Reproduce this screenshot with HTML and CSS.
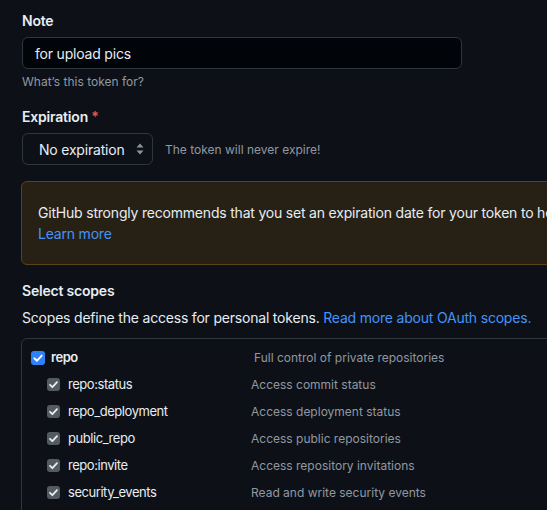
FILE: index.html
```html
<!DOCTYPE html>
<html lang="en">
<head>
<meta charset="utf-8">
<title>New personal access token</title>
<link rel="stylesheet" href="styles.css">
</head>
<body>
<div class="page">
  <label class="label">Note</label>
  <div class="input">for upload pics</div>
  <p class="hint">What’s this token for?</p>

  <label class="label label-exp">Expiration <span class="req">*</span></label>
  <div class="exp-row">
    <div class="select">
      <span>No expiration</span>
      <svg class="arrows" width="8" height="12" viewBox="0 0 8 12"><path d="M4 0.5 L7.5 4.5 L0.5 4.5 Z M0.5 7.5 L7.5 7.5 L4 11.5 Z" fill="#8b949e"/></svg>
    </div>
    <span class="note">The token will never expire!</span>
  </div>

  <div class="flash">
    GitHub strongly recommends that you set an expiration date for your token to help keep your information secure.<br>
    <a class="link" href="#">Learn more</a>
  </div>

  <h3 class="label label-scopes">Select scopes</h3>
  <p class="desc">Scopes define the access for personal tokens. <a class="link" href="#">Read more about OAuth scopes.</a></p>

  <div class="scopes">
    <div class="row row-parent">
      <span class="cb cb-blue"><svg width="14" height="14" viewBox="0 0 14 14"><path d="M3.3 7.3 L5.9 9.8 L10.7 4.6" fill="none" stroke="#fff" stroke-width="1.9" stroke-linecap="round" stroke-linejoin="round"/></svg></span>
      <span class="name name-parent">repo</span>
      <span class="what">Full control of private repositories</span>
    </div>
    <div class="row row-child">
      <span class="cb cb-grey"><svg width="13" height="13" viewBox="0 0 13 13"><path d="M3 6.8 L5.4 9.2 L10 4.2" fill="none" stroke="#e6edf3" stroke-width="1.8" stroke-linecap="round" stroke-linejoin="round"/></svg></span>
      <span class="name name-child">repo:status</span>
      <span class="what">Access commit status</span>
    </div>
    <div class="row row-child">
      <span class="cb cb-grey"><svg width="13" height="13" viewBox="0 0 13 13"><path d="M3 6.8 L5.4 9.2 L10 4.2" fill="none" stroke="#e6edf3" stroke-width="1.8" stroke-linecap="round" stroke-linejoin="round"/></svg></span>
      <span class="name name-child">repo_deployment</span>
      <span class="what">Access deployment status</span>
    </div>
    <div class="row row-child">
      <span class="cb cb-grey"><svg width="13" height="13" viewBox="0 0 13 13"><path d="M3 6.8 L5.4 9.2 L10 4.2" fill="none" stroke="#e6edf3" stroke-width="1.8" stroke-linecap="round" stroke-linejoin="round"/></svg></span>
      <span class="name name-child">public_repo</span>
      <span class="what">Access public repositories</span>
    </div>
    <div class="row row-child">
      <span class="cb cb-grey"><svg width="13" height="13" viewBox="0 0 13 13"><path d="M3 6.8 L5.4 9.2 L10 4.2" fill="none" stroke="#e6edf3" stroke-width="1.8" stroke-linecap="round" stroke-linejoin="round"/></svg></span>
      <span class="name name-child">repo:invite</span>
      <span class="what">Access repository invitations</span>
    </div>
    <div class="row row-child">
      <span class="cb cb-grey"><svg width="13" height="13" viewBox="0 0 13 13"><path d="M3 6.8 L5.4 9.2 L10 4.2" fill="none" stroke="#e6edf3" stroke-width="1.8" stroke-linecap="round" stroke-linejoin="round"/></svg></span>
      <span class="name name-child">security_events</span>
      <span class="what">Read and write security events</span>
    </div>
  </div>
</div>
</body>
</html>
```

FILE: styles.css
```css
html, body {
  margin: 0;
  padding: 0;
  background: #0d1117;
  overflow: hidden;
}
body {
  font-family: Inter, "Liberation Sans", Arial, sans-serif;
  font-size: 14px;
  line-height: 21px;
  letter-spacing: -0.2px;
  color: #e6edf3;
}
.page {
  width: 760px;
  padding: 10px 0 0 22px;
  display: flex;
  flex-direction: column;
  align-items: flex-start;
}
.label {
  display: block;
  font-weight: 600;
  font-size: 14px;
  line-height: 21px;
  margin: 0;
}
.label-exp { margin-top: 15px; }
.label-scopes { margin-top: 15px; margin-left: 0; }
.req { color: #f85149; }
.input {
  margin-top: 6px;
  box-sizing: border-box;
  width: 440px;
  height: 32px;
  border: 1px solid #30363d;
  border-radius: 6px;
  background: #010409;
  padding: 0 12px;
  display: flex;
  align-items: center;
}
.hint {
  margin: 4px 0 0;
  font-size: 12px;
  line-height: 18px;
  letter-spacing: 0;
  color: #9198a1;
}
.exp-row {
  margin-top: 6px;
  display: flex;
  align-items: center;
  gap: 12px;
}
.select {
  box-sizing: border-box;
  width: 131px;
  height: 32px;
  border: 1px solid #30363d;
  border-radius: 6px;
  background: #0d1117;
  padding: 0 8px 0 16px;
  display: flex;
  align-items: center;
  justify-content: space-between;
}
.arrows { display: block; }
.note {
  font-size: 12px;
  letter-spacing: 0;
  color: #9198a1;
}
.flash {
  margin-top: 16px;
  margin-left: -1px;
  box-sizing: border-box;
  width: 720px;
  padding: 20px 16px;
  border: 1px solid #5a4417;
  border-radius: 6px;
  background: #272115;
  white-space: nowrap;
}
.link {
  color: #4493f8;
  text-decoration: none;
}
.desc {
  margin: 6px 0 0;
}
.scopes {
  margin-top: 10px;
  margin-left: -1px;
  box-sizing: border-box;
  width: 720px;
  height: 200px;
  border: 1px solid #30363d;
  border-radius: 6px;
  padding: 5px 0 0 9px;
}
.row {
  display: flex;
  align-items: center;
  height: 27px;
}
.row-child { padding-left: 16px; }
.cb {
  border-radius: 3px;
  flex: none;
  display: flex;
}
.cb-blue { width: 14px; height: 14px; background: #2f81f7; }
.cb-grey { width: 13px; height: 13px; background: #545a62; }
.name {
  flex: none;
  font-size: 13px;
  letter-spacing: -0.45px;
}
.name-parent {
  font-weight: 600;
  width: 203px;
  padding-left: 6px;
}
.name-child {
  width: 183px;
  padding-left: 8px;
}
.what {
  font-size: 12px;
  letter-spacing: 0;
  color: #9198a1;
}
```
